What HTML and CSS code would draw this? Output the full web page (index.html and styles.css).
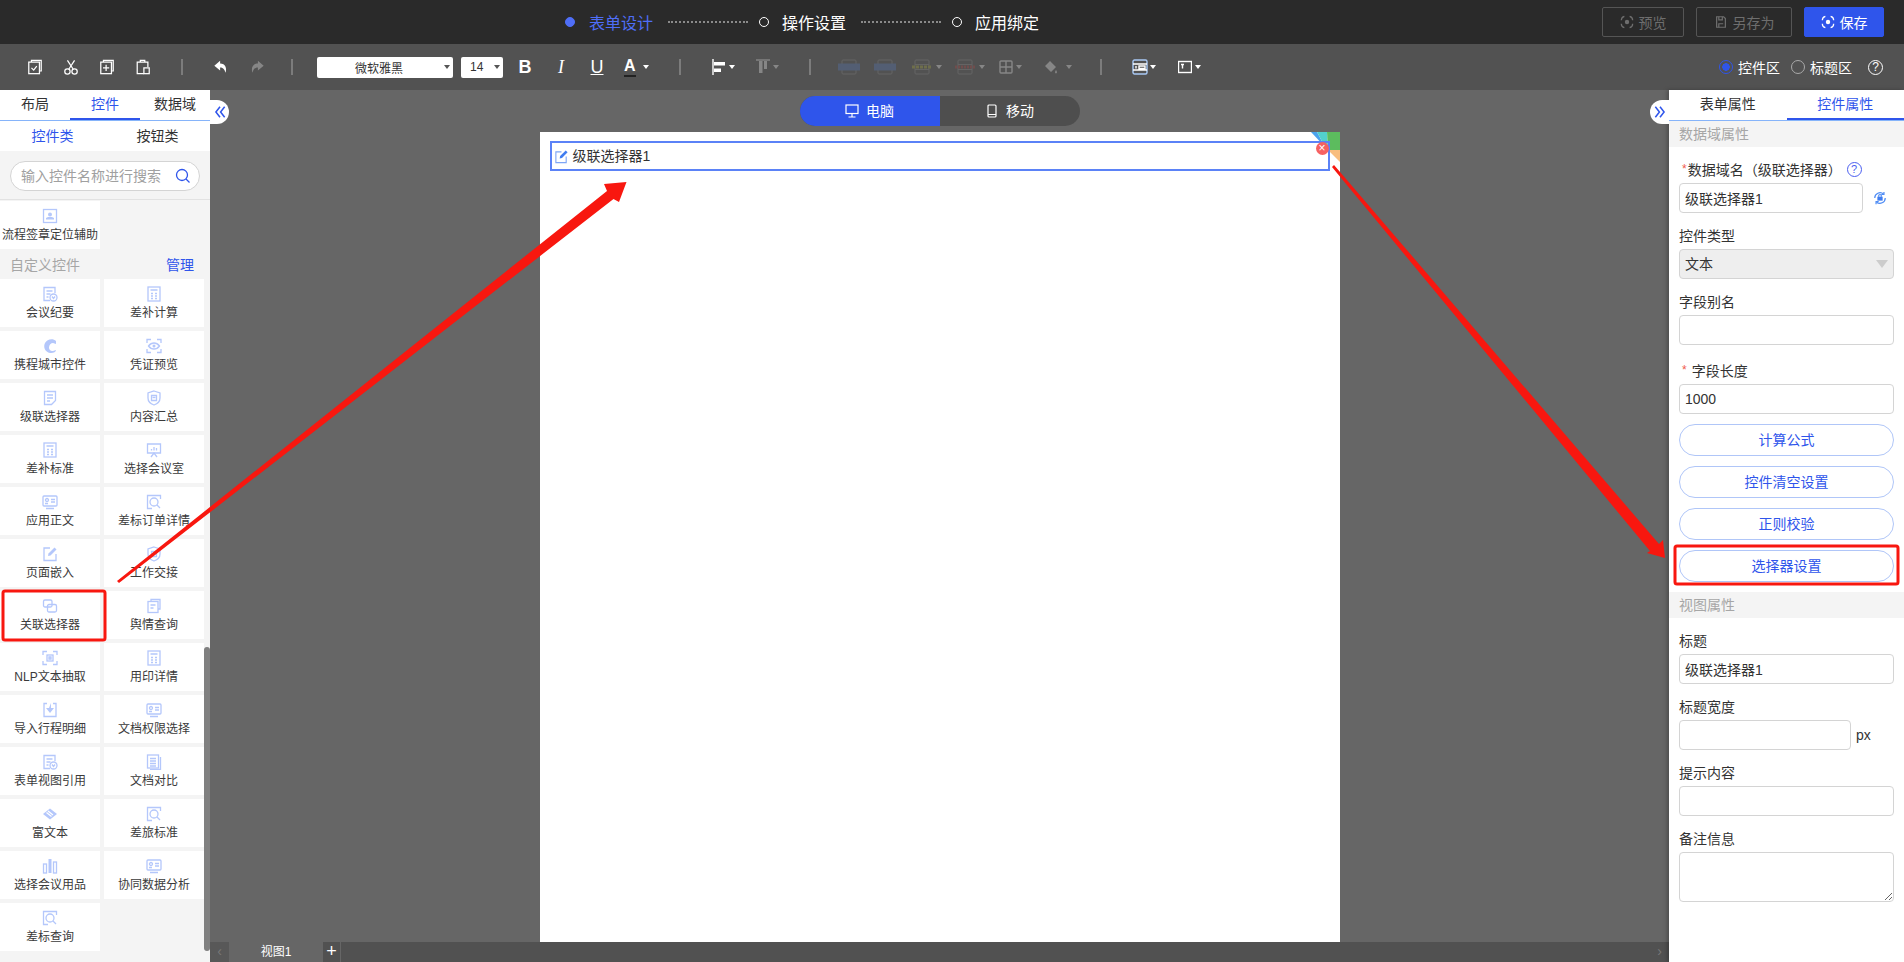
FILE: index.html
```html
<!DOCTYPE html>
<html lang="zh-CN">
<head>
  <meta charset="UTF-8" />
  <title>表单设计</title>
  <link rel="stylesheet" href="styles.css">
</head>
<body>
  <svg class="sprite" width="0" height="0">
    <symbol id="i-id" viewBox="0 0 16 16"><rect x="1.5" y="1.5" width="13" height="13"/><circle cx="8" cy="6.5" r="2" class="solid"/><path d="M4 11.5h8v-1.5l-2-1H6l-2 1z" class="solid"/></symbol>
    <symbol id="i-form" viewBox="0 0 16 16"><path d="M13 7V1.5H2v13h6"/><path d="M4.5 5h6M4.5 8h4M4.5 11h2"/><circle cx="11.5" cy="11.5" r="3.5"/><path d="M10 10.5l1.5 2 1.5-2"/></symbol>
    <symbol id="i-calc" viewBox="0 0 16 16"><rect x="2" y="1" width="12" height="14"/><path d="M4.5 4h7M5 7.5h2M9 7.5h2M5 10h2M9 10h2M5 12.5h2M9 12.5h2"/></symbol>
    <symbol id="i-swirl" viewBox="0 0 16 16"><path class="solid" d="M14 3c-3-3-9-2-11 2-2 4 0 9 5 10 3 .5 6-1 6-3l-3 1c-2 .5-4-1-4-3.500 0-2.500 2-4.500 4-4.500l3 1z"/></symbol>
    <symbol id="i-eye" viewBox="0 0 16 16"><path d="M1 5V1.500h4M11 1.500h4V5M1 11v3.500h4M11 14.500h4V11"/><path d="M2.500 8c3-4 8-4 11 0-3 4-8 4-11 0z"/><circle cx="8" cy="8" r="1.500" class="solid"/></symbol>
    <symbol id="i-doc" viewBox="0 0 16 16"><path d="M2.500 1.500h11v9l-4 4h-7z"/><path d="M5 5h6M5 8h6M5 11h3"/></symbol>
    <symbol id="i-shield" viewBox="0 0 16 16"><path d="M8 1l6 2v5c0 3.500-3 6-6 7-3-1-6-3.500-6-7V3z"/><path d="M5.500 5.500h5v5h-5z"/><path d="M6.500 7.500h3"/></symbol>
    <symbol id="i-board" viewBox="0 0 16 16"><path d="M1.500 2h13v9h-13z"/><path d="M5 15l3-4 3 4"/><path d="M5.500 8.500V7M8 8.500V5M10.500 8.500V6"/></symbol>
    <symbol id="i-screen" viewBox="0 0 16 16"><rect x="1" y="2" width="14" height="10" rx="1"/><circle cx="5" cy="6" r="1.500"/><path d="M9 5.500h4M9 8h4M3 9.500h3M4 14.500h8"/></symbol>
    <symbol id="i-search" viewBox="0 0 16 16"><path d="M14.500 5V1.500h-13v13H6"/><circle cx="8" cy="8" r="4"/><path d="M11 11l3 3"/></symbol>
    <symbol id="i-edit" viewBox="0 0 16 16"><path d="M8 2H2v12.500h12V8"/><path class="solid" d="M6 10l.5-2.500L12.500 1.500l2 2-6 6z"/></symbol>
    <symbol id="i-copy" viewBox="0 0 16 16"><rect x="1.500" y="2" width="8.500" height="7" rx="1.500"/><rect x="5.500" y="6.500" width="9" height="7.500" rx="1.500"/></symbol>
    <symbol id="i-stack" viewBox="0 0 16 16"><path d="M5 3V1.500h9V11h-2"/><rect x="2" y="3.500" width="10" height="11"/><path d="M4.500 7h5M4.500 10h3"/></symbol>
    <symbol id="i-focus" viewBox="0 0 16 16"><path d="M1 5V1.500h4M11 1.500h4V5M1 11v3.500h4M11 14.500h4V11"/><rect x="5" y="5" width="6" height="6"/><path d="M7 7h2v2H7z"/></symbol>
    <symbol id="i-import" viewBox="0 0 16 16"><path d="M5 1.500H2v13h12v-13h-3"/><path class="solid" d="M9 1v5h3l-4 5-4-5h3z"/></symbol>
    <symbol id="i-book" viewBox="0 0 16 16"><rect x="1.500" y="1" width="11" height="13"/><path d="M14.500 3v12.500H4M4 4.500h6M4 7h6M4 9.500h6M4 12h6"/></symbol>
    <symbol id="i-rich" viewBox="0 0 16 16"><path class="solid" d="M8 2.500l7 5.500-7 5.500L1 8z"/><path class="cut" d="M6 5l5 4M4.500 6.500l5 4"/></symbol>
    <symbol id="i-bars" viewBox="0 0 16 16"><rect x="1.500" y="6" width="3" height="9"/><rect x="6.500" y="1" width="3" height="14" class="solid"/><rect x="11.500" y="4" width="3" height="11"/></symbol>
    <symbol id="i-sync" viewBox="0 0 16 16"><path d="M2 8a6 6 0 0 1 10-4.500M14 8a6 6 0 0 1-10 4.500"/><path d="M12.500 1v3h-3M3.500 15v-3h3"/><path d="M6.500 6.500V5.500a1.500 1.500 0 0 1 3 0v1"/><rect x="5" y="6.500" width="6" height="4.500" class="solid"/></symbol>
    <symbol id="i-focus-eye" viewBox="0 0 16 16"><path d="M5 1.500C3 2 1.500 4 1.500 6M11 1.500c2 .5 3.500 2.500 3.500 4.500M1.500 10c0 2 1.500 4 3.500 4.500M14.500 10c0 2-1.500 4-3.500 4.500"/><circle cx="8" cy="8" r="2.500" class="solid"/></symbol>
  </svg>

  <header class="topbar">
    <div class="steps">
      <span class="step-dot active"></span>
      <span class="step-name active">表单设计</span>
      <span class="step-line"></span>
      <span class="step-dot"></span>
      <span class="step-name">操作设置</span>
      <span class="step-line"></span>
      <span class="step-dot"></span>
      <span class="step-name">应用绑定</span>
    </div>
    <div class="top-actions">
      <button class="top-btn preview"><svg class="line-icon"><use href="#i-focus-eye"/></svg>预览</button>
      <button class="top-btn save-as"><svg class="line-icon" viewBox="0 0 16 16"><path d="M3 2h8l2 2v10H3z"/><path d="M5.500 2v3.500h4V2M5.500 14v-4h5"/></svg>另存为</button>
      <button class="top-btn save"><svg class="line-icon"><use href="#i-focus-eye"/></svg>保存</button>
    </div>
  </header>

  <div class="toolbar">
    <div class="tool"><svg class="tb-icon" viewBox="0 0 18 18"><path d="M5 3.500V1.500h11v12h-2"/><rect x="2" y="3.500" width="12" height="13"/><path d="M5 10l2.500 2.500L11 8"/></svg></div>
    <div class="tool"><svg class="tb-icon" viewBox="0 0 18 18"><circle cx="5" cy="14" r="3"/><circle cx="13" cy="14" r="3"/><path d="M6.500 11.500L13 1.500M11.500 11.500L5 1.500"/></svg></div>
    <div class="tool"><svg class="tb-icon" viewBox="0 0 18 18"><path d="M5 3.500V1.500h11v12h-2"/><rect x="2" y="3.500" width="12" height="13"/><path d="M8 6.500v7M4.500 10h7"/></svg></div>
    <div class="tool"><svg class="tb-icon" viewBox="0 0 18 18"><path d="M10 16.500H2.500v-13h12V9"/><path d="M6 3.500V1.500h5v2"/><rect x="10" y="10" width="6" height="6.500"/></svg></div>
    <span class="tb-sep first"></span>
    <div class="tool"><svg class="tb-fill" viewBox="0 0 18 18"><path d="M8 2L1.500 7.500 8 13V9.500c3 0 5 1.500 6 6 2-5 0-10.500-6-10.500z"/></svg></div>
    <div class="tool off"><svg class="tb-fill" viewBox="0 0 18 18"><path d="M10 2l6.500 5.500L10 13V9.500c-3 0-5 1.500-6 6-2-5 0-10.500 6-10.500z"/></svg></div>
    <span class="tb-sep second"></span>
    <div class="fake-select font-select">微软雅黑<i class="caret dark"></i></div>
    <div class="fake-select size-select">14<i class="caret dark"></i></div>
    <div class="tool text-tool bold first-text">B</div>
    <div class="tool text-tool italic">I</div>
    <div class="tool text-tool underline">U</div>
    <div class="tool text-tool color-tool"><span class="color-a">A</span><i class="caret"></i></div>
    <span class="tb-sep third"></span>
    <div class="tool-drop align"><svg class="tb-icon small" viewBox="0 0 14 16"><path d="M1 0v16"/><rect x="2" y="3" width="11" height="3.500" class="white"/><rect x="2" y="9.500" width="7" height="3.500" class="white"/></svg><i class="caret"></i></div>
    <div class="tool-drop off valign"><svg class="tb-icon small" viewBox="0 0 14 16"><path d="M0 1h14"/><rect x="3" y="2" width="3.500" height="12" class="white"/><rect x="8" y="2" width="3" height="8" class="white"/></svg><i class="caret"></i></div>
    <span class="tb-sep fourth"></span>
    <div class="tool-drop off merge-a"><svg class="tb-wide" viewBox="0 0 22 16"><rect x="4" y="1" width="14" height="14" rx="1"/><rect x="0" y="5" width="22" height="6" class="blue"/></svg></div>
    <div class="tool-drop off merge-b"><svg class="tb-wide" viewBox="0 0 22 16"><rect x="4" y="1" width="14" height="14" rx="1"/><rect x="0" y="5" width="22" height="6" class="blue"/></svg></div>
    <div class="tool-drop off merge-c"><svg class="tb-wide" viewBox="0 0 22 16"><rect x="4" y="1" width="14" height="14" rx="1"/><path d="M4 5.500h14M4 10.500h14"/><path class="olive" d="M1 8h20"/></svg><i class="caret"></i></div>
    <div class="tool-drop off merge-d"><svg class="tb-wide" viewBox="0 0 22 16"><rect x="4" y="1" width="14" height="14" rx="1"/><path d="M4 5.500h14M4 10.500h14"/><path class="maroon" d="M1 8h20"/></svg><i class="caret"></i></div>
    <div class="tool-drop off grid-tool"><svg class="tb-icon small" viewBox="0 0 14 16"><rect x="1" y="2" width="12" height="12" rx="1"/><path d="M7 2v12M1 8h12"/></svg><i class="caret"></i></div>
    <div class="tool-drop off fill-tool"><svg class="tb-fill small" viewBox="0 0 14 16"><path d="M6 2l6 6-5 5-6-6zM12 11c1 1.500 1.500 3 0 3.500-1.500-.5-1-2 0-3.500z"/></svg><i class="caret"></i></div>
    <span class="tb-sep fifth"></span>
    <div class="tool-drop layout-a"><svg class="tb-icon mid" viewBox="0 0 16 16"><rect x="1" y="1" width="14" height="14" rx="1.500" class="lightblue"/><path d="M1 5h14M1 11h14M4 7v2.500M7 7h6v2.500H7z"/></svg><i class="caret"></i></div>
    <div class="tool-drop layout-b"><svg class="tb-icon small" viewBox="0 0 14 14"><rect x=".5" y="1.500" width="13" height="11"/><path d="M3 4.500h3M4.500 4.500v4"/></svg><i class="caret"></i></div>
    <div class="area-switch">
      <span class="radio on"></span><span class="radio-text">控件区</span>
      <span class="radio"></span><span class="radio-text last">标题区</span>
      <span class="help-mark">?</span>
    </div>
  </div>

  <div class="workspace">
    <aside class="sidebar">
      <div class="tabs">
        <div class="tab">布局</div>
        <div class="tab active">控件</div>
        <div class="tab">数据域</div>
      </div>
      <div class="sub-tabs">
        <div class="sub-tab active">控件类</div>
        <div class="sub-tab">按钮类</div>
      </div>
      <div class="search-wrap">
        <div class="search-box">
          <input type="text" placeholder="输入控件名称进行搜索" />
          <svg class="search-icon" viewBox="0 0 16 16"><circle cx="7" cy="7" r="5.500"/><path d="M11 11l3.500 3.500"/></svg>
        </div>
      </div>
      <div class="widget-list">
        <div class="widget"><svg class="widget-icon"><use href="#i-id"/></svg>流程签章定位辅助</div>
        <div class="widget-row-title"><span>自定义控件</span><a>管理</a></div>
        <div class="widget"><svg class="widget-icon"><use href="#i-form"/></svg>会议纪要</div>
        <div class="widget"><svg class="widget-icon"><use href="#i-calc"/></svg>差补计算</div>
        <div class="widget"><svg class="widget-icon"><use href="#i-swirl"/></svg>携程城市控件</div>
        <div class="widget"><svg class="widget-icon"><use href="#i-eye"/></svg>凭证预览</div>
        <div class="widget"><svg class="widget-icon"><use href="#i-doc"/></svg>级联选择器</div>
        <div class="widget"><svg class="widget-icon"><use href="#i-shield"/></svg>内容汇总</div>
        <div class="widget"><svg class="widget-icon"><use href="#i-calc"/></svg>差补标准</div>
        <div class="widget"><svg class="widget-icon"><use href="#i-board"/></svg>选择会议室</div>
        <div class="widget"><svg class="widget-icon"><use href="#i-screen"/></svg>应用正文</div>
        <div class="widget"><svg class="widget-icon"><use href="#i-search"/></svg>差标订单详情</div>
        <div class="widget"><svg class="widget-icon"><use href="#i-edit"/></svg>页面嵌入</div>
        <div class="widget"><svg class="widget-icon"><use href="#i-shield"/></svg>工作交接</div>
        <div class="widget"><svg class="widget-icon"><use href="#i-copy"/></svg>关联选择器</div>
        <div class="widget"><svg class="widget-icon"><use href="#i-stack"/></svg>舆情查询</div>
        <div class="widget"><svg class="widget-icon"><use href="#i-focus"/></svg>NLP文本抽取</div>
        <div class="widget"><svg class="widget-icon"><use href="#i-calc"/></svg>用印详情</div>
        <div class="widget"><svg class="widget-icon"><use href="#i-import"/></svg>导入行程明细</div>
        <div class="widget"><svg class="widget-icon"><use href="#i-screen"/></svg>文档权限选择</div>
        <div class="widget"><svg class="widget-icon"><use href="#i-form"/></svg>表单视图引用</div>
        <div class="widget"><svg class="widget-icon"><use href="#i-book"/></svg>文档对比</div>
        <div class="widget"><svg class="widget-icon"><use href="#i-rich"/></svg>富文本</div>
        <div class="widget"><svg class="widget-icon"><use href="#i-search"/></svg>差旅标准</div>
        <div class="widget"><svg class="widget-icon"><use href="#i-bars"/></svg>选择会议用品</div>
        <div class="widget"><svg class="widget-icon"><use href="#i-screen"/></svg>协同数据分析</div>
        <div class="widget"><svg class="widget-icon"><use href="#i-search"/></svg>差标查询</div>
        <div class="list-thumb"></div>
      </div>
    </aside>

    <main class="canvas">
      <div class="collapse left"><svg viewBox="0 0 12 12"><path d="M6 1.500L2.500 6 6 10.500M10 1.500L6.500 6l3.500 4.500"/></svg></div>
      <div class="collapse right"><svg viewBox="0 0 12 12"><path d="M2 1.500L5.500 6 2 10.500M6 1.500L9.500 6 6 10.500"/></svg></div>
      <div class="stage">
        <div class="device-toggle">
          <div class="device active"><svg viewBox="0 0 14 14"><rect x="1" y="1" width="12" height="8.500"/><path d="M7 9.500V13M3.500 13h7"/></svg><span>电脑</span></div>
          <div class="device"><svg viewBox="0 0 14 14"><rect x="3" y="1" width="8" height="12" rx="1"/><path d="M3 10.500h8"/></svg><span>移动</span></div>
        </div>
        <div class="sheet">
          <svg class="corner" viewBox="0 0 29 30">
            <path d="M0 0h6l8 15z" fill="#4aa3ee"/>
            <path d="M6 0h10l1 18-3-3z" fill="#52d0cc"/>
            <path d="M16 0h13v18H17z" fill="#5cbc5e"/>
            <path d="M17 18h12v12z" fill="#f8bd7f"/>
          </svg>
          <div class="field-box">
            <svg class="field-icon" viewBox="0 0 16 16"><path d="M8 3H2v11.500h11V8"/><path class="solid" d="M6 10l.5-2.500L12.500 1.500l2 2-6 6z"/></svg>
            <span class="field-text">级联选择器1</span>
            <span class="field-del">×</span>
          </div>
        </div>
      </div>
      <div class="view-bar">
        <div class="view-arrow">‹</div>
        <div class="view-tab">视图1</div>
        <div class="view-add">+</div>
        <div class="view-end">›</div>
      </div>
    </main>

    <aside class="panel">
      <div class="tabs">
        <div class="tab half">表单属性</div>
        <div class="tab half active">控件属性</div>
      </div>
      <div class="section-head">数据域属性</div>
      <div class="section-body">
        <div class="form-group">
          <label><span class="star">*</span>数据域名（级联选择器）<span class="help-blue">?</span></label>
          <div class="input-row">
            <input class="name-input" type="text" value="级联选择器1" />
            <svg class="sync-icon"><use href="#i-sync"/></svg>
          </div>
        </div>
        <div class="form-group">
          <label>控件类型</label>
          <div class="select-box">文本<i class="select-arrow"></i></div>
        </div>
        <div class="form-group">
          <label>字段别名</label>
          <input type="text" />
        </div>
        <div class="form-group length-group">
          <label><span class="star wide">*</span>字段长度</label>
          <input type="text" value="1000" />
        </div>
        <button class="pill-btn">计算公式</button>
        <button class="pill-btn">控件清空设置</button>
        <button class="pill-btn">正则校验</button>
        <button class="pill-btn">选择器设置</button>
      </div>
      <div class="section-head">视图属性</div>
      <div class="section-body">
        <div class="form-group">
          <label>标题</label>
          <input type="text" value="级联选择器1" />
        </div>
        <div class="form-group">
          <label>标题宽度</label>
          <div class="input-row">
            <input class="width-input" type="text" />
            <span class="unit">px</span>
          </div>
        </div>
        <div class="form-group">
          <label>提示内容</label>
          <input type="text" />
        </div>
        <div class="form-group">
          <label>备注信息</label>
          <textarea></textarea>
        </div>
      </div>
    </aside>
  </div>

  <!-- red annotations drawn over the screenshot -->
  <svg class="marks" viewBox="0 0 1904 962">
    <rect x="3" y="591" width="102" height="49" rx="2"/>
    <rect x="1675" y="546" width="223" height="38" rx="2"/>
    <path class="arrow" d="M118 582L117 581L607 191L604 184L626.500 182L619 202L613.500 199L119 583z"/>
    <path class="arrow" d="M1333 166L1334 165L1659 544L1663 540L1665 558L1647 553L1650 551L1332 167z"/>
  </svg>
</body>
</html>
```

FILE: styles.css
```css
* {
  box-sizing: border-box;
}

html,
body {
  margin: 0;
  height: 100%;
  overflow: hidden;
}

body {
  font-family: "Liberation Sans", "Noto Sans CJK SC", sans-serif;
  font-size: 14px;
  color: #333;
  display: flex;
  flex-direction: column;
  background: #666;
}

.sprite {
  position: absolute;
}

/* top bar */
.topbar {
  height: 44px;
  background: #2a2a2a;
  display: flex;
  align-items: center;
  flex: none;
}

.steps {
  display: flex;
  align-items: center;
  margin-left: 565px;
}

.step-dot {
  width: 10px;
  height: 10px;
  border: 1.5px solid #fff;
  border-radius: 50%;
}

.step-dot.active {
  background: #4f6ef7;
  border-color: #4f6ef7;
}

.step-name {
  font-size: 16px;
  color: #fff;
  margin-left: 13px;
}

.step-name.active {
  color: #4f6ef7;
  margin-left: 14px;
}

.step-line {
  width: 80px;
  border-top: 2px dotted #8a8a8a;
  margin: 0 11px 0 15px;
}

.top-actions {
  margin-left: auto;
  display: flex;
  gap: 12px;
  padding-right: 20px;
}

.top-btn {
  height: 30px;
  border: 1px solid #555;
  border-radius: 2px;
  background: transparent;
  color: #6e6e6e;
  font: inherit;
  font-size: 14px;
  display: flex;
  align-items: center;
  justify-content: center;
  gap: 5px;
  padding: 0;
}

.top-btn.preview {
  width: 82px;
}

.top-btn.save-as {
  width: 96px;
}

.top-btn.save {
  width: 80px;
  background: #2f55eb;
  border-color: #2f55eb;
  color: #fff;
}

.line-icon {
  width: 14px;
  height: 14px;
  fill: none;
  stroke: currentColor;
  stroke-width: 1.4;
  --solid: currentColor;
}

/* toolbar */
.toolbar {
  height: 46px;
  background: #525252;
  display: flex;
  align-items: center;
  padding-left: 17px;
  flex: none;
}

.tool {
  width: 36px;
  height: 24px;
  display: flex;
  align-items: center;
  justify-content: center;
  color: #fff;
}

.off {
  opacity: 0.3;
}

.tb-icon {
  width: 16px;
  height: 16px;
  fill: none;
  stroke: #fff;
  stroke-width: 1.4;
}

.tb-icon.small {
  width: 14px;
  height: 16px;
}

.tb-icon.mid {
  width: 16px;
}

.tb-icon .white {
  fill: #fff;
  stroke: none;
}

.tb-icon .lightblue {
  stroke: #a9c9f5;
}

.tb-fill {
  width: 16px;
  height: 16px;
  fill: #fff;
}

.tb-fill.small {
  width: 14px;
}

.tb-wide {
  width: 22px;
  height: 16px;
  fill: none;
  stroke: #aaa;
  opacity: 0.7;
}

.tb-wide .blue {
  fill: #5b8ff0;
  stroke: #5b8ff0;
}

.tb-wide .olive {
  stroke: #d8d83a;
  stroke-width: 3;
  stroke-dasharray: 3 1;
}

.tb-wide .maroon {
  stroke: #e2413c;
  stroke-width: 3;
  stroke-dasharray: 2 1;
}

.tb-sep {
  width: 2px;
  height: 16px;
  background: #7c7c7c;
}

.tb-sep.first {
  margin: 0 20px;
}

.tb-sep.second {
  margin-left: 16px;
}

.tb-sep.third {
  margin-left: 24px;
}

.tb-sep.fourth {
  margin-left: 30px;
}

.tb-sep.fifth {
  margin-left: 28px;
}

.fake-select {
  height: 21px;
  background: #fff;
  border-radius: 2px;
  color: #333;
  font-size: 12px;
  display: flex;
  align-items: center;
  position: relative;
}

.font-select {
  width: 136px;
  margin-left: 24px;
  padding-left: 38px;
}

.size-select {
  width: 42px;
  margin-left: 8px;
  padding-left: 9px;
}

.caret {
  display: block;
  width: 0;
  height: 0;
  border-left: 3px solid transparent;
  border-right: 3px solid transparent;
  border-top: 4px solid #fff;
  flex: none;
}

.caret.dark {
  border-top-color: #555;
  margin-left: auto;
  margin-right: 3px;
}

.text-tool {
  font-size: 18px;
}

.first-text {
  margin-left: 4px;
}

.bold {
  font-weight: 700;
}

.italic {
  font-style: italic;
  font-family: "Liberation Serif", serif;
}

.underline {
  text-decoration: underline;
}

.color-tool {
  width: 40px;
  justify-content: flex-start;
  padding-left: 9px;
  gap: 7px;
  font-size: 16px;
  font-weight: 700;
}

.color-a {
  border-bottom: 2px solid #222;
  line-height: 18px;
}

.tool-drop {
  display: flex;
  align-items: center;
  gap: 3px;
}

.align {
  margin-left: 31px;
}

.valign {
  margin-left: 21px;
}

.merge-a {
  margin-left: 27px;
}

.merge-b {
  margin-left: 14px;
}

.merge-c {
  margin-left: 15px;
}

.merge-d {
  margin-left: 12px;
}

.grid-tool {
  margin-left: 14px;
}

.fill-tool {
  margin-left: 22px;
  gap: 8px;
}

.layout-a {
  margin-left: 30px;
  gap: 2px;
}

.layout-b {
  margin-left: 22px;
}

.area-switch {
  margin-left: auto;
  padding-right: 21px;
  display: flex;
  align-items: center;
  color: #fff;
}

.radio {
  width: 14px;
  height: 14px;
  border: 1px solid #aaa;
  border-radius: 50%;
  margin-right: 5px;
}

.radio.on {
  border-color: #2f55eb;
  background: radial-gradient(circle, #2f55eb 0 3.5px, transparent 4px);
}

.radio-text {
  margin-right: 11px;
}

.radio-text.last {
  margin-right: 16px;
}

.help-mark {
  width: 15px;
  height: 15px;
  border: 1px solid #fff;
  border-radius: 50%;
  font-size: 12px;
  line-height: 13px;
  text-align: center;
}

/* main area */
.workspace {
  flex: 1;
  display: flex;
  min-height: 0;
}

.sidebar {
  width: 210px;
  background: #fff;
  flex: none;
  display: flex;
  flex-direction: column;
}

.tabs {
  display: flex;
  border-bottom: 1px solid #86b4fa;
  flex: none;
}

.tab {
  width: 70px;
  height: 30px;
  line-height: 29px;
  text-align: center;
  border-bottom: 2px solid transparent;
}

.tab.half {
  width: 50%;
}

.tab.active {
  color: #2f55eb;
  border-bottom-color: #2f55eb;
}

.sub-tabs {
  display: flex;
  height: 30px;
  flex: none;
}

.sub-tab {
  width: 105px;
  line-height: 30px;
  text-align: center;
}

.sub-tab.active {
  color: #2f55eb;
}

.search-wrap {
  height: 49px;
  background: #f4f4f4;
  border-bottom: 1px solid #e2e2e2;
  padding: 10px;
  flex: none;
}

.search-box {
  height: 30px;
  border: 1px solid #d4d4d4;
  border-radius: 15px;
  background: #fff;
  display: flex;
  align-items: center;
  padding: 0 8px 0 10px;
}

.search-box input {
  border: none;
  outline: none;
  padding: 0;
  height: 24px;
  width: 145px;
  border-radius: 0;
  font-size: 14px;
  flex: none;
}

.search-box input::placeholder {
  color: #a0a0a0;
}

.search-icon {
  width: 16px;
  height: 16px;
  margin-left: auto;
  fill: none;
  stroke: #2f55eb;
  stroke-width: 1.3;
}

.widget-list {
  flex: 1;
  background: #f4f4f4;
  display: grid;
  grid-template-columns: 100px 100px;
  grid-auto-rows: min-content;
  column-gap: 4px;
  row-gap: 4px;
  padding-top: 1px;
  position: relative;
  overflow: hidden;
}

.widget {
  height: 48px;
  background: #fff;
  font-size: 12px;
  white-space: nowrap;
  display: flex;
  flex-direction: column;
  align-items: center;
  padding-top: 7px;
  color: #3a3a3a;
}

.widget-icon {
  width: 16px;
  height: 16px;
  margin-bottom: 1px;
  fill: none;
  stroke: #b4c7fb;
  stroke-width: 1.3;
}

.solid {
  fill: var(--solid, #b4c7fb);
  stroke: none;
}

.cut {
  stroke: #fff;
}

.widget-row-title {
  grid-column: 1 / -1;
  height: 22px;
  line-height: 24px;
  display: flex;
  justify-content: space-between;
  padding: 0 10px;
  color: #a6a6a6;
}

.widget-row-title a {
  color: #2f55eb;
}

.list-thumb {
  position: absolute;
  right: 0;
  top: 447px;
  width: 6px;
  height: 304px;
  background: #808080;
  border-radius: 3px;
}

.canvas {
  flex: 1;
  background: #666;
  display: flex;
  flex-direction: column;
  position: relative;
  min-width: 0;
}

.collapse {
  position: absolute;
  top: 10px;
  width: 19px;
  height: 24px;
  background: #fff;
  display: flex;
  align-items: center;
  justify-content: center;
  z-index: 1;
}

.collapse svg {
  width: 14px;
  height: 14px;
  fill: none;
  stroke: #2f55eb;
  stroke-width: 1.3;
}

.collapse.left {
  left: 0;
  border-radius: 0 12px 12px 0;
}

.collapse.right {
  right: 0;
  border-radius: 12px 0 0 12px;
}

.stage {
  flex: 1;
  min-height: 0;
  display: flex;
  flex-direction: column;
  align-items: center;
  padding-top: 6px;
  overflow: hidden;
}

.device-toggle {
  width: 280px;
  height: 30px;
  border-radius: 15px;
  background: #4e4e4e;
  display: flex;
  overflow: hidden;
  flex: none;
  margin-bottom: 6px;
  color: #fff;
}

.device {
  width: 140px;
  display: flex;
  align-items: center;
  justify-content: center;
  gap: 7px;
}

.device span {
  padding-bottom: 2px;
}

.device svg {
  width: 14px;
  height: 14px;
  fill: none;
  stroke: #fff;
  stroke-width: 1.2;
}

.device.active {
  background: #2f55eb;
}

.sheet {
  width: 800px;
  flex: 1;
  background: #fff;
  padding: 9px 10px;
  position: relative;
}

.corner {
  position: absolute;
  top: 0;
  right: 0;
  width: 29px;
  height: 30px;
}

.field-box {
  height: 30px;
  border: 2px solid #5b82f7;
  display: flex;
  align-items: center;
  padding-left: 2px;
  gap: 4px;
  position: relative;
  color: #333;
}

.field-text {
  padding-bottom: 2px;
}

.field-icon {
  width: 15px;
  height: 15px;
  fill: none;
  stroke: #7ea6f6;
  stroke-width: 1.2;
}

.field-icon .solid {
  fill: #3f7cf0;
}

.field-del {
  position: absolute;
  top: -1px;
  right: -1px;
  width: 13px;
  height: 13px;
  border-radius: 50%;
  background: #f66161;
  color: #fff;
  font-size: 12px;
  line-height: 12px;
  text-align: center;
}

.view-bar {
  height: 20px;
  background: #515151;
  display: flex;
  flex: none;
  color: #fff;
}

.view-arrow {
  width: 19px;
  text-align: center;
  line-height: 18px;
  color: #777;
  background: #585858;
}

.view-tab {
  width: 94px;
  background: #666;
  font-size: 12px;
  line-height: 20px;
  text-align: center;
}

.view-add {
  width: 18px;
  font-size: 18px;
  line-height: 19px;
  text-align: center;
  border-right: 1px solid #666;
}

.view-end {
  margin-left: auto;
  width: 19px;
  text-align: center;
  line-height: 18px;
  color: #777;
}

.panel {
  width: 235px;
  background: #fff;
  flex: none;
  box-shadow: -2px 0 4px rgba(0, 0, 0, 0.25);
  position: relative;
}

.section-head {
  height: 26px;
  line-height: 26px;
  background: #f4f4f4;
  color: #a6a6a6;
  padding-left: 10px;
}

.section-body {
  padding: 13px 10px 0;
}

.form-group {
  margin-bottom: 13px;
}

.form-group label {
  display: flex;
  align-items: center;
  height: 20px;
  padding-bottom: 2px;
  margin-bottom: 3px;
}

.length-group {
  margin-top: 16px;
  margin-bottom: 10px;
}

.star {
  color: #f05a4c;
  font-size: 12px;
  margin: 0 1px 0 3px;
}

.star.wide {
  margin-right: 5px;
}

.help-blue {
  width: 15px;
  height: 15px;
  border: 1px solid #4a5ef0;
  border-radius: 50%;
  color: #4a5ef0;
  font-size: 11px;
  line-height: 13px;
  text-align: center;
  margin-left: 5px;
}

input,
textarea {
  width: 100%;
  height: 30px;
  border: 1px solid #d4d4d4;
  border-radius: 4px;
  padding: 0 5px;
  font: inherit;
  color: #333;
  display: block;
}

textarea {
  height: 50px;
}

.input-row {
  display: flex;
  align-items: center;
}

.name-input {
  width: 184px;
}

.sync-icon {
  width: 14px;
  height: 14px;
  margin-left: 10px;
  fill: none;
  stroke: #4f8df5;
  stroke-width: 1.4;
  --solid: #3f7cf0;
}

.width-input {
  width: 172px;
}

.unit {
  margin-left: 5px;
}

.select-box {
  height: 30px;
  border: 1px solid #d4d4d4;
  border-radius: 4px;
  background: #eee;
  padding-left: 5px;
  line-height: 28px;
  position: relative;
}

.select-arrow {
  position: absolute;
  right: 5px;
  top: 10px;
  border-left: 6px solid transparent;
  border-right: 6px solid transparent;
  border-top: 8px solid #ccc;
}

.pill-btn {
  display: block;
  width: 100%;
  height: 32px;
  margin-bottom: 10px;
  padding: 0 0 2px;
  border: 1px solid #b0c6f8;
  border-radius: 16px;
  background: #fff;
  color: #2f55eb;
  font: inherit;
}

/* annotations */
.marks {
  position: absolute;
  left: 0;
  top: 0;
  width: 1904px;
  height: 962px;
  pointer-events: none;
}

.marks rect {
  fill: none;
  stroke: #f8170f;
  stroke-width: 3;
}

.marks .arrow {
  fill: #f8170f;
}
```
